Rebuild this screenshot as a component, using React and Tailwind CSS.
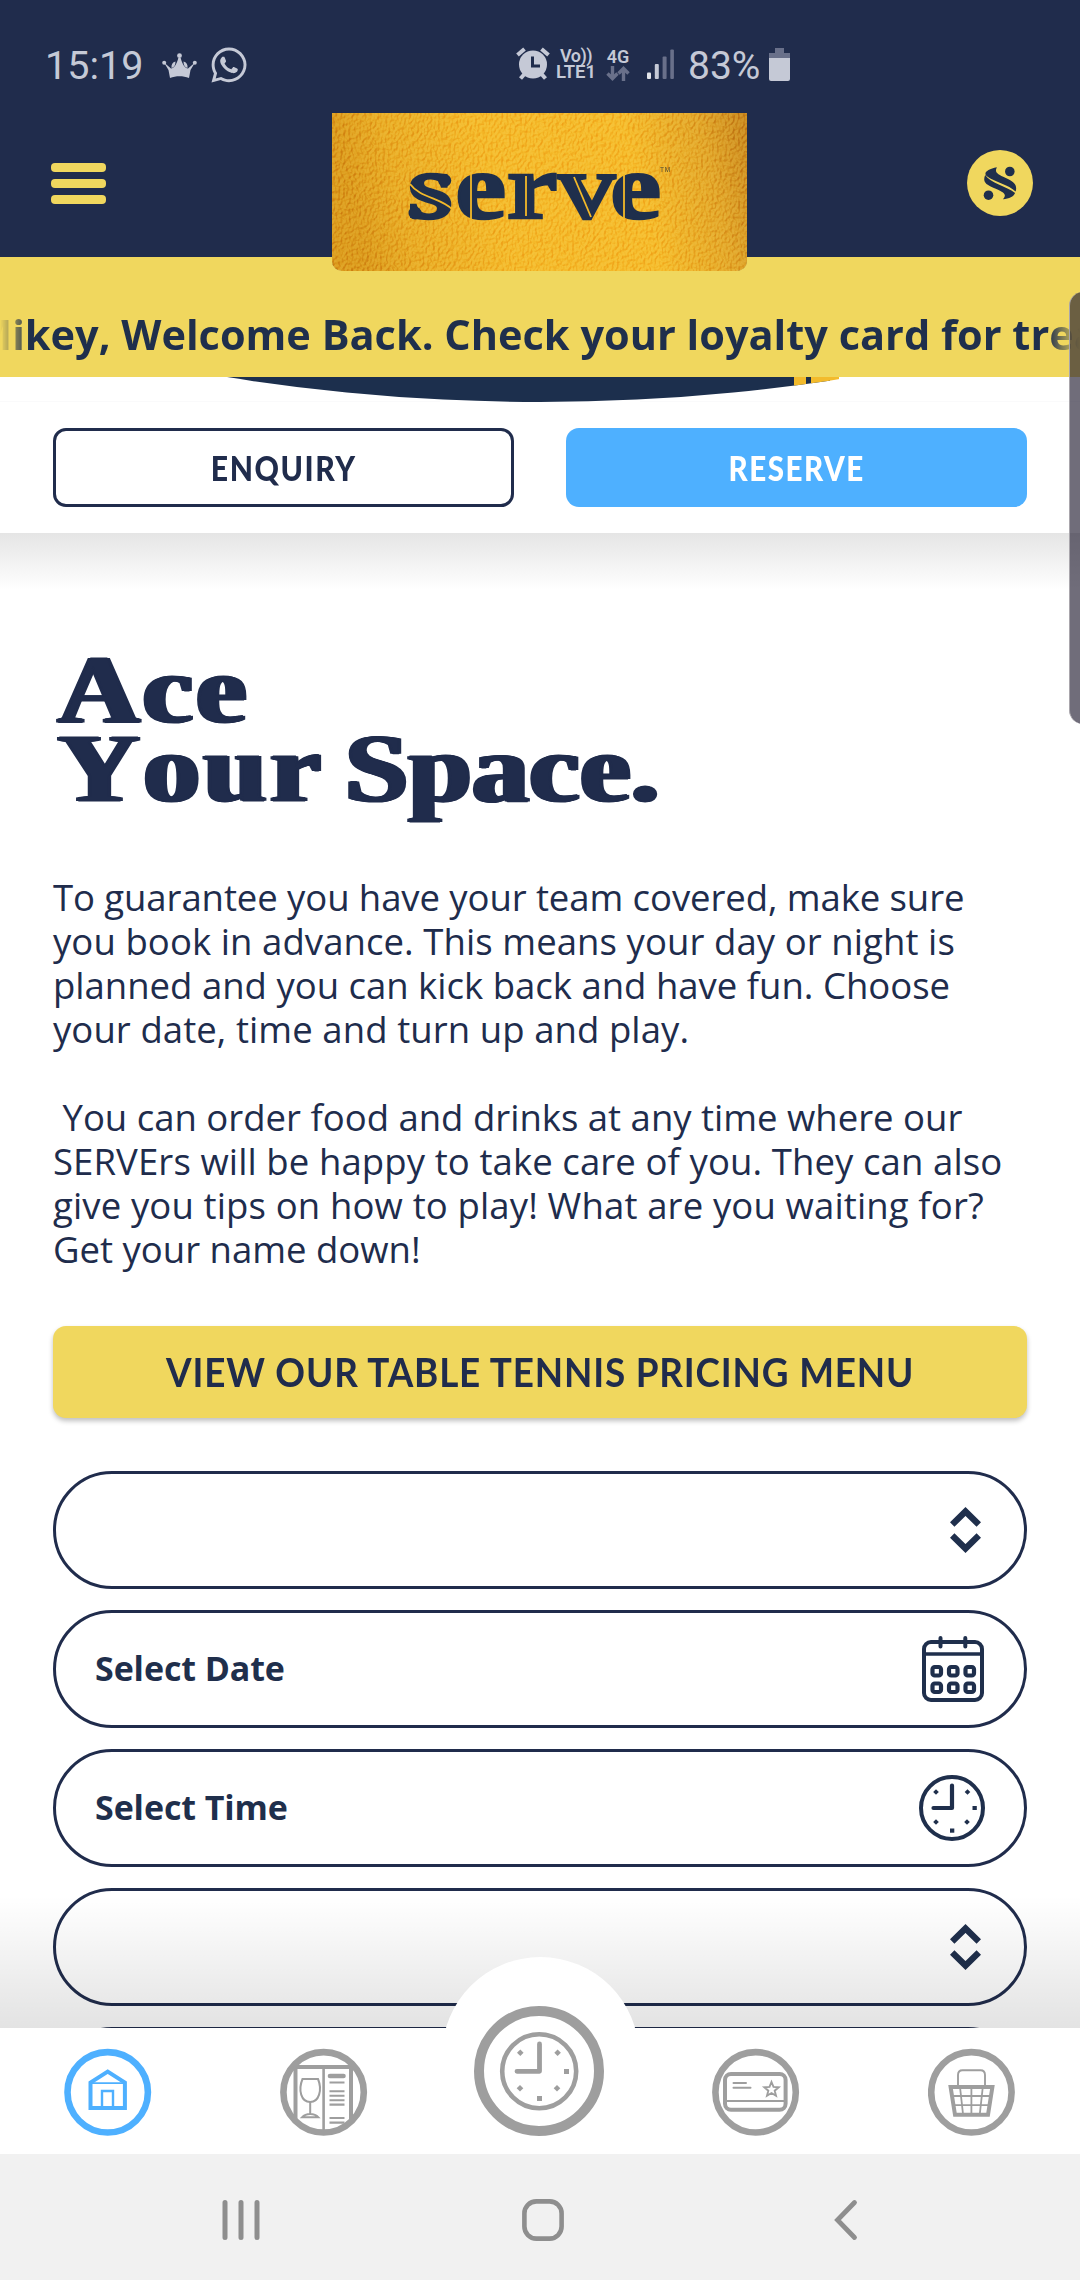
import { FaWhatsapp } from "react-icons/fa";

const NAVY = "#202c4c";
const GREY = "#9e9e9e";

function Crown() {
  return (
    <svg className="w-[35px] h-[26px]" viewBox="0 0 35 26" fill="#c5c9d6">
      <path d="M8 25 L6.5 17 L2 9.5 L9 15.5 C12 15 14.5 12 16.3 5 L18.7 5 C20.5 12 23 15 26 15.5 L33 9.5 L28.5 17 L27 25 C21 22.6 14 22.6 8 25Z" />
      <circle cx="17.5" cy="2.7" r="2.4" />
      <circle cx="2.2" cy="9.8" r="2" />
      <circle cx="32.8" cy="9.8" r="2" />
      <path d="M9.5 15 Q13.5 14 13.5 8.5 Q9 9.5 9.5 15Z M25.5 15 Q21.5 14 21.5 8.5 Q26 9.5 25.5 15Z" />
    </svg>
  );
}

function Alarm() {
  return (
    <svg className="w-[34px] h-[34px]" viewBox="0 0 34 34">
      <g stroke="#c5c9d6" strokeWidth="4" fill="none">
        <path d="M1.5 8 L8.5 2" />
        <path d="M32.5 8 L25.5 2" />
        <path d="M8.5 27 L4.5 31.5" />
        <path d="M25.5 27 L29.5 31.5" />
      </g>
      <circle cx="17" cy="17.5" r="14" fill="#c5c9d6" />
      <path d="M16.5 9.5 V19 H24" fill="none" stroke="#202c4c" strokeWidth="3" />
    </svg>
  );
}

function StatusBar() {
  return (
    <div className="h-[113px] shrink-0 pt-[46px] pl-[45px] flex items-start text-[#c5c9d6] font-['Roboto',sans-serif]">
      <div className="h-10 flex items-center">
        <span className="w-[117px] text-[39.5px] leading-10">15:19</span>
        <Crown />
        <FaWhatsapp className="ml-[12px] -mt-[2px] w-[40px] h-[40px]" />
        <span className="ml-[267px] -mt-[4px]"><Alarm /></span>
        <div className="ml-[6px] -mt-[5px] w-[40px] flex flex-col items-center font-semibold">
          <span className="text-[18px] leading-[17px] tracking-[-0.5px]">Vo))</span>
          <span className="text-[18.5px] leading-[17px]">LTE1</span>
        </div>
        <div className="ml-[9px] -mt-[4px] w-[26px] flex flex-col items-center font-semibold">
          <span className="text-[18px] leading-[17px]">4G</span>
          <svg className="mt-[1px] w-[24px] h-[15px]" viewBox="0 0 24 15" fill="none" stroke="#69708a" strokeWidth="3.4">
            <path d="M6.5 0 V13 M1.5 7.5 L6.5 12.5 L11.5 7.5" />
            <path d="M17.5 15 V2 M12.5 7.5 L17.5 2.5 L22.5 7.5" />
          </svg>
        </div>
        <svg className="ml-[16px] -mt-[4px] w-[28px] h-[31px]" viewBox="0 0 28 31">
          <rect x="0" y="23.5" width="4" height="6.5" rx="1" fill="#e3e5ea" />
          <rect x="7.8" y="15" width="4" height="15" rx="1" fill="#c5c9d6" />
          <rect x="15.6" y="7.5" width="4" height="22.5" rx="1" fill="#69708a" />
          <rect x="23.3" y="0.5" width="3.6" height="29.5" rx="1" fill="#69708a" />
        </svg>
        <span className="ml-[13px] w-[81px] text-[39px] leading-10">83%</span>
        <svg className="-mt-[4px] w-[21px] h-[33px]" viewBox="0 0 21 33">
          <path d="M6 0 H15 V5 H21 V10 H0 V5 H6Z" fill="#69708a" />
          <path d="M0 10 H21 V31 Q21 33 19 33 H2 Q0 33 0 31Z" fill="#c5c9d6" />
        </svg>
      </div>
    </div>
  );
}

function ServeMark({ className }) {
  return (
    <svg className={className} viewBox="263 218 140 142" fill="#1f2f4c">
      <path d="M320 223 C283 230 262 246 277 260 C310 286 370 296 398 325 C406 300 396 284 355 267 C325 254 308 246 320 223Z" />
      <path d="M271 256 C260 284 272 294 305 309 C345 326 366 334 345 357 C372 354 390 347 396 331 C360 303 292 290 271 256Z" />
      <circle cx="374" cy="241" r="20" />
      <circle cx="285" cy="340" r="20" />
    </svg>
  );
}

function Logo() {
  return (
    <div className="absolute left-1/2 top-0 ml-[-208px] w-[415px] h-[158px] rounded-b-[10px] overflow-hidden">
      <svg className="block w-full h-full" viewBox="332 113 415 158">
        <defs>
          <linearGradient id="gold" x1="0" y1="0.1" x2="1" y2="0">
            <stop offset="0" stopColor="#dc9b1c" />
            <stop offset="0.12" stopColor="#e9ac24" />
            <stop offset="0.35" stopColor="#f4ba2a" />
            <stop offset="0.7" stopColor="#f5bb2a" />
            <stop offset="0.88" stopColor="#e2a628" />
            <stop offset="1" stopColor="#c9871c" />
          </linearGradient>
          <filter id="grain" x="0" y="0" width="1" height="1" colorInterpolationFilters="sRGB">
            <feTurbulence type="fractalNoise" baseFrequency="0.38 0.28" numOctaves="4" seed="7" result="n" />
            <feDiffuseLighting in="n" surfaceScale="3.4" diffuseConstant="0.72" lightingColor="#ffffff">
              <feDistantLight azimuth="215" elevation="55" />
            </feDiffuseLighting>
          </filter>
        </defs>
        <rect x="332" y="113" width="415" height="158" fill="url(#gold)" />
        <rect x="332" y="113" width="415" height="158" filter="url(#grain)" className="mix-blend-soft-light" opacity="0.55" />
        <g transform="translate(408 0) scale(1.23 1)">
          <text
            x="0 38.5 80.2 122 164.5"
            y="218"
            fontFamily="Liberation Serif, serif"
            fontWeight="700"
            fontSize="93"
            fill="#1f2f4c"
            stroke="#1f2f4c"
            strokeWidth="2.6"
          >
            serve
          </text>
        </g>
        <circle cx="444.7" cy="180.5" r="6.5" fill="#1f2f4c" />
        <circle cx="415" cy="213" r="6.5" fill="#1f2f4c" />
        <g stroke="#f3b929" strokeWidth="1.8" fill="none">
          <path d="M410 184 C420 198 442 198 453 210" />
          <path d="M471 174 V219" />
          <path d="M526 176 V216" />
          <path d="M574 177 L591 217" />
          <path d="M624 174 V219" />
        </g>
        <text x="660" y="171.5" fontFamily="Liberation Sans, sans-serif" fontSize="6.5" letterSpacing="0.8" fill="#4d4630">TM</text>
      </svg>
    </div>
  );
}

function Header() {
  return (
    <div className="relative z-10 h-[144px] shrink-0 flex justify-between pl-[51px] pr-[47px]">
      <div className="mt-[50px] flex flex-col gap-[7.5px]">
        <div className="w-[55px] h-[8.5px] rounded-[4px] bg-[#f0d75e]" />
        <div className="w-[55px] h-[8.5px] rounded-[4px] bg-[#f0d75e]" />
        <div className="w-[55px] h-[8.5px] rounded-[4px] bg-[#f0d75e]" />
      </div>
      <Logo />
      <div className="mt-[37px] w-[66px] h-[66px] rounded-full bg-[#f0d75e] flex items-center justify-center">
        <ServeMark className="w-[34px] h-[34px]" />
      </div>
    </div>
  );
}

function Marquee() {
  return (
    <div className="h-[120px] shrink-0 bg-[#f0d75e] pt-[34px] overflow-hidden">
      <div className="overflow-hidden [mask-image:linear-gradient(to_right,transparent_0px,black_30px,black_1048px,transparent_1080px)]">
        <p className="-ml-[27px] w-[1400px] whitespace-nowrap text-[41.5px] leading-[86px] font-bold text-[#1f2f4c] font-['Open_Sans',sans-serif]">
          Mikey, Welcome Back. Check your loyalty card for treats
        </p>
      </div>
    </div>
  );
}

function Arc() {
  return (
    <svg className="block shrink-0 w-[1080px] h-[25px] bg-white" viewBox="0 377 1080 25">
      <clipPath id="disc">
        <circle cx="540" cy="-1570" r="1972" />
      </clipPath>
      <g clipPath="url(#disc)">
        <rect x="200" y="377" width="630" height="25" fill="#1c2f4d" />
        <rect x="794" y="377" width="12" height="25" fill="#f3bb2c" />
        <rect x="811" y="377" width="28" height="25" fill="#f3bb2c" />
      </g>
      <path d="M0 401.5 H440 M640 401.5 H1080" stroke="#fafafb" />
    </svg>
  );
}

function Actions() {
  return (
    <div className="h-[131px] shrink-0 bg-white px-[53px] pt-[26px] flex gap-[52px] font-['Lato',sans-serif] font-black text-[35px]">
      <button className="w-[461px] h-[79px] rounded-[13px] border-[3px] border-[#202c4c] text-[#202c4c]">
        <span className="inline-block scale-x-[0.86] tracking-[1.8px]">ENQUIRY</span>
      </button>
      <button className="w-[461px] h-[79px] rounded-[13px] bg-[#4eb0ff] text-white">
        <span className="inline-block scale-x-[0.845] tracking-[1.8px]">RESERVE</span>
      </button>
    </div>
  );
}

function Chevrons() {
  return (
    <svg className="mr-[43px] w-[31px] h-[46px]" viewBox="0 0 31 46" fill="none" stroke="#1f2f4c" strokeWidth="6.4">
      <path d="M2.2 17.5 L15.5 4.5 L28.8 17.5" />
      <path d="M2.2 28.5 L15.5 41.5 L28.8 28.5" />
    </svg>
  );
}

function CalendarIcon() {
  return (
    <svg className="mr-[40px] w-[62px] h-[66px]" viewBox="0 0 62 66" fill="none" stroke="#1f2f4c" strokeWidth="4">
      <rect x="2" y="6" width="58" height="58" rx="7" />
      <path d="M2 18 H60" strokeWidth="3.4" />
      <path d="M18.5 2 V10.5 M43.3 2 V10.5" strokeLinecap="round" />
      {[10.5, 27, 43.5].map((x) =>
        [31, 47.5].map((y) => <rect key={`${x}-${y}`} x={x} y={y} width="8.5" height="8.5" rx="2.2" strokeWidth="4.2" />)
      )}
    </svg>
  );
}

function ClockIcon() {
  return (
    <svg className="mr-[39px] w-[66px] h-[66px]" viewBox="0 0 66 66" fill="none" stroke="#1f2f4c" strokeWidth="4">
      <circle cx="33" cy="33" r="31" />
      <path d="M33 10.5 V33 H14.5" strokeLinecap="round" strokeLinejoin="round" strokeWidth="4.2" />
      <g fill="#1f2f4c" stroke="none">
        {[[17, 17], [48.5, 17], [17, 47], [48, 47]].map(([x, y]) => (
          <path key={`${x}-${y}`} d={`M${x} ${y - 2.8} l2.8 2.8 l-2.8 2.8 l-2.8 -2.8Z`} />
        ))}
        <rect x="53.5" y="31" width="4.3" height="4" />
        <rect x="31" y="53.5" width="4.3" height="4.2" />
      </g>
    </svg>
  );
}

function Field({ label, icon }) {
  return (
    <div className="h-[118px] shrink-0 rounded-full border-[3px] border-[#202c4c] pl-[39px] flex items-center justify-between">
      <span className="-mt-[2px] text-[34px] tracking-[-0.1px] font-bold text-[#1f2f4c] font-['Open_Sans',sans-serif]">{label}</span>
      {icon}
    </div>
  );
}

function Main() {
  return (
    <div className="relative flex-1 min-h-0 overflow-hidden bg-white px-[53px] flex flex-col">
      <div className="absolute left-0 top-0 w-full h-[57px] bg-linear-to-b from-[#e5e5e5] to-white" />
      <h1 className="relative mt-[117px] ml-[5px] h-[158px] shrink-0 w-[800px] origin-left scale-x-[1.15] text-[98px] leading-[79px] font-bold text-[#202c4c] font-['Liberation_Serif',serif] [-webkit-text-stroke:1.2px_#202c4c] [text-shadow:1.2px_0_0_#202c4c,-1.2px_0_0_#202c4c,2.6px_0_0_#202c4c,-2.6px_0_0_#202c4c] [font-kerning:none]">
        <span className="tracking-[3px]">Ace</span>
        <br />
        <span className="tracking-[3.5px] [word-spacing:-10px]">Your </span>
        <span className="tracking-[0.7px]">Space.</span>
      </h1>
      <div className="mt-[67px] h-[396px] shrink-0 whitespace-pre text-[36.5px] leading-[44px] text-[#202c4c] font-['Open_Sans',sans-serif]">
        <p>
          <span className="block tracking-[-0.08px]">To guarantee you have your team covered, make sure</span>
          <span className="block tracking-[0.08px]">you book in advance. This means your day or night is</span>
          <span className="block">planned and you can kick back and have fun. Choose</span>
          <span className="block tracking-[0.08px]">your date, time and turn up and play.</span>
        </p>
        <p className="mt-[44px]">
          <span className="block">{" You can order food and drinks at any time where our"}</span>
          <span className="block tracking-[0.1px]">SERVErs will be happy to take care of you. They can also</span>
          <span className="block tracking-[0.14px]">give you tips on how to play! What are you waiting for?</span>
          <span className="block">Get your name down!</span>
        </p>
      </div>
      <button className="mt-[55px] h-[92px] shrink-0 rounded-[13px] bg-[#f0d75e] shadow-[0_3px_5px_rgba(0,0,0,0.25)] font-['Lato',sans-serif] font-bold text-[40px] text-[#202c4c]">
        <span className="inline-block whitespace-nowrap scale-x-[0.921] tracking-[0.9px]">VIEW OUR TABLE TENNIS PRICING MENU</span>
      </button>
      <div className="mt-[53px] flex flex-col gap-[21px]">
        <Field icon={<Chevrons />} />
        <Field label="Select Date" icon={<CalendarIcon />} />
        <Field label="Select Time" icon={<ClockIcon />} />
        <Field icon={<Chevrons />} />
        <Field />
      </div>
      <div className="absolute left-0 bottom-0 w-full h-[132px] bg-linear-to-b from-black/0 to-black/11" />
    </div>
  );
}

function HomeIcon() {
  return (
    <svg className="w-[88px] h-[88px]" viewBox="0 0 88 88" fill="none" stroke="#4eb0ff">
      <circle cx="43.7" cy="44.3" r="40.2" strokeWidth="6.6" />
      <path d="M26.5 60 V34.5 L43.7 23.5 L60.9 34.5 V60Z" strokeWidth="4" />
      <path d="M26.5 35.2 H61" strokeWidth="1.8" />
      <path d="M38 60 V43 H49 V60" strokeWidth="2.4" />
    </svg>
  );
}

function MenuIcon() {
  return (
    <svg className="w-[88px] h-[88px]" viewBox="0 0 88 88" fill="none" stroke={GREY}>
      <clipPath id="menu-disc">
        <circle cx="43.6" cy="44.3" r="40" />
      </clipPath>
      <g clipPath="url(#menu-disc)">
        <path d="M15.5 88 V19 H71 V88" strokeWidth="4" />
        <path d="M43.6 19 V88" strokeWidth="2.6" />
        <path d="M22.5 31 H38 C42.5 42 39 54 30.2 54 C21 54 18 42 22.5 31Z" strokeWidth="2" />
        <path d="M30.2 54 V65.5 M22 69.3 Q25 66 30.2 66 Q35.4 66 38.4 69.3Z" strokeWidth="2" />
        <path d="M50 28 H63.5" strokeWidth="4.6" strokeLinecap="round" />
        <path d="M49.5 34.5 H64.5 M49.5 43.2 H64.5 M49.5 47.8 H64.5 M49.5 52.2 H64.5 M49.5 56.6 H64.5 M49.5 70 H64.5 M49.5 74.6 H64.5" strokeWidth="2.1" />
      </g>
      <circle cx="43.6" cy="44.3" r="40.2" strokeWidth="6.6" />
    </svg>
  );
}

function CardIcon() {
  return (
    <svg className="w-[88px] h-[88px]" viewBox="0 0 88 88" fill="none" stroke={GREY}>
      <circle cx="43.6" cy="44.3" r="40.2" strokeWidth="6.6" />
      <rect x="13" y="26" width="60.6" height="35.8" rx="6" strokeWidth="4" />
      <path d="M13 53 H73.6" strokeWidth="2" />
      <path d="M21.5 35 H34 M21.5 39.8 H38.5" strokeWidth="2" strokeLinecap="round" />
      <path d="M59.5 34 L61.5 38.9 L66.7 39.3 L62.7 42.7 L64 47.8 L59.5 45 L55 47.8 L56.3 42.7 L52.3 39.3 L57.5 38.9Z" strokeWidth="1.9" />
    </svg>
  );
}

function BasketIcon() {
  return (
    <svg className="w-[88px] h-[88px]" viewBox="0 0 88 88" fill="none" stroke={GREY}>
      <circle cx="43.4" cy="44.3" r="40.2" strokeWidth="6.6" />
      <path d="M30 38 V27 Q30 22.2 34.5 22.2 H52.5 Q57 22.2 57 27 V38" strokeWidth="1.9" />
      <path d="M22.6 39 H64.4 L60 66.8 H27Z" strokeWidth="4" />
      <path d="M32 39 L35 66 M43.4 39 V66 M54.8 39 L51.8 66 M24 48 H63 M25.5 57.2 H61.5" strokeWidth="1.8" />
    </svg>
  );
}

function BigClockIcon() {
  return (
    <svg className="-ml-[2px] w-[130px] h-[130px]" viewBox="0 0 130 130" fill="none" stroke={GREY}>
      <circle cx="65" cy="65" r="60" strokeWidth="10" />
      <circle cx="65.2" cy="65.3" r="37" strokeWidth="4.6" />
      <path d="M65.5 38 V65.3 H43" strokeWidth="4.8" strokeLinecap="round" strokeLinejoin="round" />
      <g fill={GREY} stroke="none">
        {[[46.3, 46.7], [83.6, 46.7], [46, 82.3], [83, 82.3]].map(([x, y]) => (
          <path key={`${x}-${y}`} d={`M${x} ${y - 3.3} l3.3 3.3 l-3.3 3.3 l-3.3 -3.3Z`} />
        ))}
        <rect x="90" y="63" width="5" height="5" />
        <rect x="63" y="90" width="5" height="5" />
      </g>
    </svg>
  );
}

function TabBar() {
  return (
    <nav className="relative z-10 h-[126px] shrink-0 bg-white grid grid-cols-5">
      <div className="absolute left-1/2 -ml-[98.5px] -top-[71px] w-[197px] h-[197px] rounded-full bg-white" />
      <div className="pt-[20px] flex justify-center items-start"><HomeIcon /></div>
      <div className="pt-[20px] flex justify-center items-start"><MenuIcon /></div>
      <div className="relative -mt-[22px] flex justify-center items-start"><BigClockIcon /></div>
      <div className="pt-[20px] flex justify-center items-start"><CardIcon /></div>
      <div className="pt-[20px] flex justify-center items-start"><BasketIcon /></div>
    </nav>
  );
}

function SystemBar() {
  return (
    <div className="relative z-10 h-[126px] shrink-0 bg-[#f1f1f1] pt-[45px] pl-[222px] flex items-start">
      <svg className="w-[38px] h-[42px]" viewBox="0 0 38 42" stroke="#8e8e8e" strokeWidth="5" strokeLinecap="round">
        <path d="M3 3.5 V38.5 M19 3.5 V38.5 M35 3.5 V38.5" />
      </svg>
      <svg className="ml-[262px] w-[42px] h-[42px]" viewBox="0 0 42 42" fill="none" stroke="#8e8e8e" strokeWidth="4.6">
        <rect x="2.4" y="2.4" width="37.2" height="37.2" rx="12" />
      </svg>
      <svg className="ml-[270px] w-[24px] h-[42px]" viewBox="0 0 24 42" fill="none" stroke="#8e8e8e" strokeWidth="4.8" strokeLinecap="round">
        <path d="M20.5 3.5 L3.5 21 L20.5 38.5" />
      </svg>
    </div>
  );
}

export default function App() {
  return (
    <div className="relative w-[1080px] h-[2280px] overflow-hidden flex flex-col bg-[#202c4c]" style={{ color: NAVY }}>
      <StatusBar />
      <Header />
      <Marquee />
      <Arc />
      <Actions />
      <Main />
      <TabBar />
      <SystemBar />
      <div className="absolute z-20 -right-[20px] top-[292px] w-[31px] h-[432px] rounded-[14px] border-l-[1.5px] border-[#a9a6ac] bg-[rgba(35,30,50,0.65)]" />
    </div>
  );
}
